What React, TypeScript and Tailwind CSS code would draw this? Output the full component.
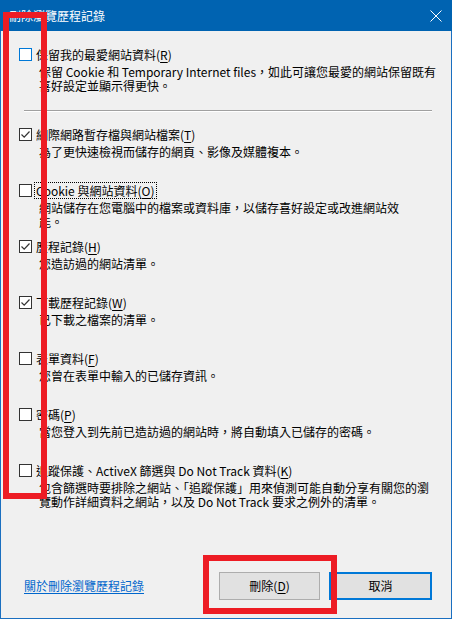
import React from "react";

const font = { fontFamily: '"Noto Sans CJK TC", "Noto Sans", sans-serif' };

const Mn = ({ k }: { k: string }) => (
  <span>
    (<span className="underline underline-offset-2">{k}</span>)
  </span>
);

const Checkbox = ({ checked, hot }: { checked?: boolean; hot?: boolean }) => (
  <div
    className={`flex h-[13px] w-[13px] shrink-0 items-center justify-center border bg-white ${
      hot ? "border-[#0078d7]" : "border-[#333333]"
    }`}
  >
    {checked && (
      <svg width="11" height="11" viewBox="0 0 11 11">
        <path d="M1.5 5.5 L4.2 8.2 L9.5 2.5" fill="none" stroke="#333" strokeWidth="1.2" />
      </svg>
    )}
  </div>
);

type ItemProps = {
  label: React.ReactNode;
  lines: string[];
  checked?: boolean;
  hot?: boolean;
  focus?: boolean;
  fixed?: boolean;
};

const Item = ({ label, lines, checked, hot, focus, fixed }: ItemProps) => (
  <div className={fixed ? "h-[56px]" : ""}>
    <div className="flex h-[16px] items-center">
      <Checkbox checked={checked} hot={hot} />
      <span
        className={`ml-[2px] whitespace-nowrap px-[1px] leading-[15px] ${
          focus ? "border border-dotted border-black" : "border border-transparent"
        }`}
      >
        {label}
      </span>
    </div>
    <div className="mt-[3px] pl-[20px] leading-[14px] whitespace-nowrap">
      {lines.map((l, i) => (
        <div key={i}>{l}</div>
      ))}
    </div>
  </div>
);

export default function App() {
  return (
    <div
      className="relative flex h-[619px] w-[452px] flex-col border-x border-b border-[#1a6fc0] bg-[#f0f0f0] text-[12px] text-black"
      style={font}
    >
      <div className="-mx-[1px] flex h-[31px] shrink-0 items-center justify-between bg-[#0063b1] pl-[9px] pr-[10px] text-white">
        <span className="text-[12px]">刪除瀏覽歷程記錄</span>
        <svg width="12" height="12" viewBox="0 0 12 12">
          <path d="M0.5 0.5 L11.5 11.5 M11.5 0.5 L0.5 11.5" stroke="white" strokeWidth="1" />
        </svg>
      </div>

      <div className="pl-[18px] pt-[15px]">
        <Item
          hot
          label={<>保留我的最愛網站資料<Mn k="R" /></>}
          lines={[
            "保留 Cookie 和 Temporary Internet files，如此可讓您最愛的網站保留既有",
            "喜好設定並顯示得更快。",
          ]}
        />
        <div className="mr-[19px] ml-[5px] mt-[17px] h-[1px] bg-[#a0a0a0]" />
        <div className="mr-[19px] ml-[5px] h-[1px] bg-white" />
        <div className="mt-[14px]">
          <Item
            fixed
            checked
            label={<>網際網路暫存檔與網站檔案<Mn k="T" /></>}
            lines={["為了更快速檢視而儲存的網頁、影像及媒體複本。"]}
          />
          <Item
            fixed
            focus
            label={<>Cookie 與網站資料<Mn k="O" /></>}
            lines={["網站儲存在您電腦中的檔案或資料庫，以儲存喜好設定或改進網站效", "能。"]}
          />
          <Item fixed checked label={<>歷程記錄<Mn k="H" /></>} lines={["您造訪過的網站清單。"]} />
          <Item fixed checked label={<>下載歷程記錄<Mn k="W" /></>} lines={["已下載之檔案的清單。"]} />
          <Item fixed label={<>表單資料<Mn k="F" /></>} lines={["您曾在表單中輸入的已儲存資訊。"]} />
          <Item
            fixed
            label={<>密碼<Mn k="P" /></>}
            lines={["當您登入到先前已造訪過的網站時，將自動填入已儲存的密碼。"]}
          />
          <Item
            fixed
            label={<>追蹤保護、ActiveX 篩選與 Do Not Track 資料<Mn k="K" /></>}
            lines={[
              "包含篩選時要排除之網站、「追蹤保護」用來偵測可能自動分享有關您的瀏",
              "覽動作詳細資料之網站，以及 Do Not Track 要求之例外的清單。",
            ]}
          />
        </div>
      </div>

      <div className="mt-auto mb-[18px] flex h-[28px] items-center pl-[23px] pr-[19px]">
        <a className="cursor-pointer text-[#0066cc] underline underline-offset-2">關於刪除瀏覽歷程記錄</a>
        <button className="ml-auto flex h-[28px] w-[101px] items-center justify-center border border-[#adadad] bg-[#e1e1e1]">
          刪除<Mn k="D" />
        </button>
        <button className="ml-[9px] flex h-[28px] w-[103px] items-center justify-center border-2 border-[#0078d7] bg-[#e1e1e1]">
          取消
        </button>
      </div>

      <div className="pointer-events-none absolute left-[2px] top-[12px] h-[487px] w-[44px] border-[6px] border-[#ed1c24]" />
      <div className="pointer-events-none absolute left-[202px] top-[555px] h-[59px] w-[134px] border-[6px] border-[#ed1c24]" />
    </div>
  );
}
